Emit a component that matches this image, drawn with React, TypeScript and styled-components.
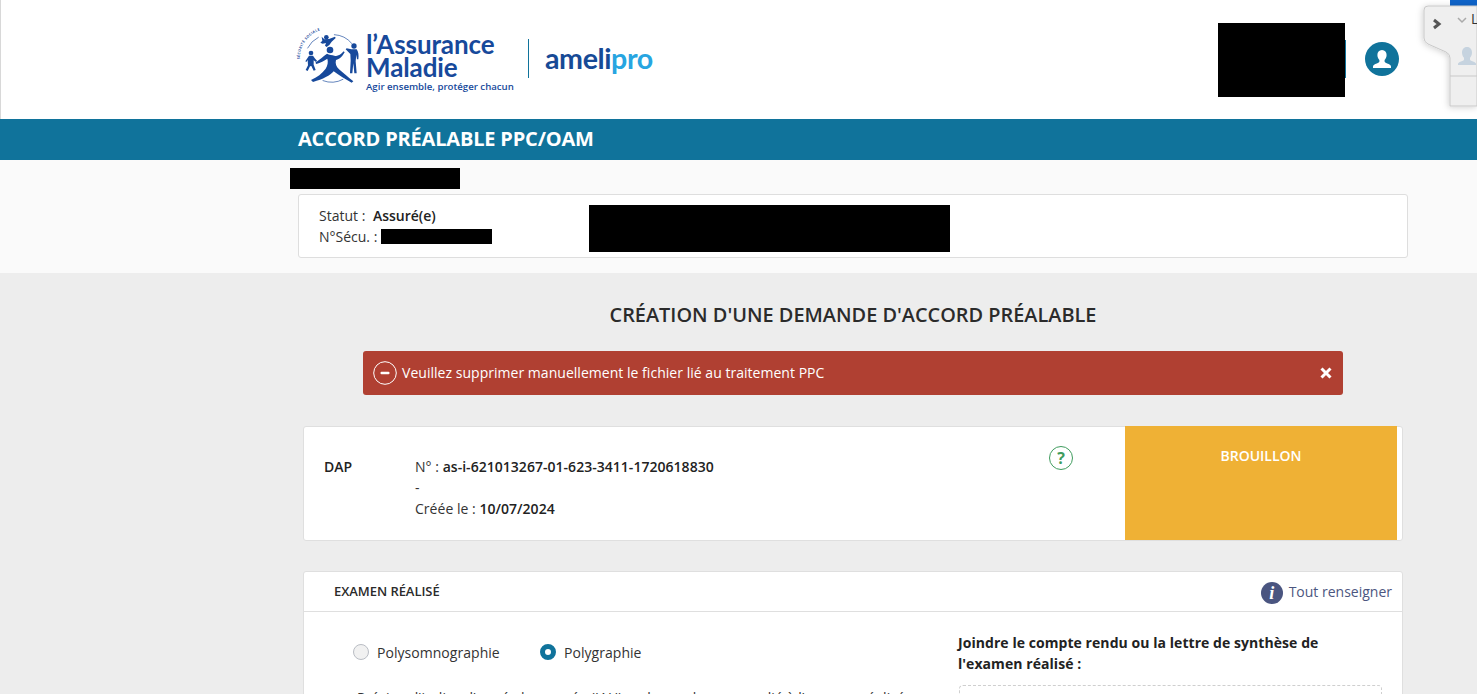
import React from "react";
import styled, { createGlobalStyle } from "styled-components";

const Global = createGlobalStyle`
  html, body { margin: 0; padding: 0; background: #ededed; }
  body { font-family: "Open Sans", "Liberation Sans", sans-serif; color: #2b2b2b; font-size: 14px; }
  #root { height: 694px; overflow: hidden; position: relative; }
  * { box-sizing: border-box; }
`;

const Redacted = styled.div<{ $w: number; $h: number }>`
  width: ${(p) => p.$w}px;
  height: ${(p) => p.$h}px;
  background: #000;
  flex: none;
`;

const Header = styled.header`
  height: 119px;
  background: #fff;
  border-left: 1px solid #d8d8d8;
  display: flex;
  align-items: flex-start;
  padding-left: 294px;
`;
const LogoMark = styled.svg`
  width: 66px;
  height: 70px;
  margin-top: 20px;
  flex: none;
`;
const BrandText = styled.div`
  margin: 33px 0 0 5px;
  width: 162px;
  flex: none;
  color: #17499b;
  font-family: Lato, "Open Sans", sans-serif;
`;
const BrandName = styled.div`
  font-size: 26px;
  line-height: 23px;
  font-weight: 700;
  letter-spacing: -0.1px;
`;
const BrandTag = styled.div`
  font-family: "Open Sans", sans-serif;
  font-size: 9.65px;
  line-height: 13px;
  font-weight: 600;
  margin-top: 1px;
  white-space: nowrap;
`;
const Divider = styled.div`
  width: 1px;
  height: 39px;
  background: #10739b;
  margin-top: 39px;
  flex: none;
`;
const Product = styled.div`
  margin: 39px 0 0 16px;
  font-family: Lato, "Open Sans", sans-serif;
  font-size: 28.6px;
  line-height: 38px;
  font-weight: 700;
  color: #174a96;
  letter-spacing: -0.4px;
  flex: none;
  width: 112px;
`;
const ProductAccent = styled.span`
  color: #27a5e1;
  font-weight: 700;
`;
const UserArea = styled.div`
  margin-left: auto;
  margin-right: 78px;
  margin-top: 23px;
  display: flex;
  align-items: flex-start;
`;
const UserRule = styled.div`
  width: 1px;
  height: 38px;
  margin-top: 17px;
  background: #10739b;
`;
const Avatar = styled.div`
  width: 34px;
  height: 34px;
  border-radius: 50%;
  background: #10739b;
  margin: 19px 0 0 19px;
  display: flex;
  align-items: center;
  justify-content: center;
`;

const Banner = styled.div`
  height: 41px;
  background: #10739b;
  color: #fff;
  font-size: 20px;
  line-height: 40px;
  font-weight: 700;
  padding-left: 298px;
  letter-spacing: -0.18px;
`;

const PatientZone = styled.section`
  background: #fafafa;
  padding: 8px 69px 15px 298px;
`;
const PatientName = styled(Redacted)`
  margin: 0 0 5px -8px;
`;
const PatientCard = styled.div`
  height: 64px;
  background: #fff;
  border: 1px solid #dedede;
  border-radius: 3px;
  display: flex;
  align-items: center;
  padding-left: 20px;
`;
const PatientInfo = styled.div`
  width: 270px;
  line-height: 21px;
  flex: none;
`;
const InfoLine = styled.div`
  display: flex;
  align-items: center;
  gap: 4px;
  height: 21px;
  font-size: 14px;
  color: #333;
`;
const PatientExtra = styled(Redacted)`
  margin-top: 4px;
`;
const Strong = styled.strong`
  font-weight: 600;
  color: #222;
`;

const Main = styled.main`
  padding: 0 74px 0 303px;
`;
const Title = styled.h1`
  margin: 0;
  padding-top: 28px;
  height: 78px;
  text-align: center;
  font-size: 19.9px;
  line-height: 28px;
  font-weight: 600;
  color: #2b2b2b;
`;
const Alert = styled.div`
  margin: 0 60px 31px;
  height: 44px;
  background: #b04032;
  border-radius: 3px;
  color: #fff;
  display: flex;
  align-items: center;
  padding: 0 11px 0 10px;
  gap: 5px;
  font-size: 14px;
`;
const AlertText = styled.span`
  flex: 1;
  position: relative;
  top: -1px;
  letter-spacing: 0.03px;
`;

const Card = styled.div`
  background: #fff;
  border: 1px solid #dfdfdf;
  border-radius: 3px;
`;
const DapCard = styled(Card)`
  height: 115px;
  display: flex;
  align-items: stretch;
  margin-bottom: 30px;
  padding-right: 5px;
`;
const DapLabel = styled.div`
  width: 111px;
  padding: 29px 0 0 20px;
  line-height: 21px;
  font-weight: 600;
  color: #222;
  flex: none;
`;
const DapInfo = styled.div`
  flex: 1;
  padding-top: 29px;
  line-height: 21px;
  color: #333;
  letter-spacing: 0.03px;
`;
const HelpCell = styled.div`
  width: 76px;
  padding-top: 19px;
  flex: none;
`;
const HelpRing = styled.div`
  width: 24px;
  height: 24px;
  border-radius: 50%;
  border: 1px solid #3f9c5e;
  color: #3f9c5e;
  font-weight: 700;
  font-size: 16px;
  line-height: 22px;
  text-align: center;
`;
const Status = styled.div`
  width: 272px;
  margin-top: -1px;
  background: #efb135;
  color: #fff;
  font-weight: 600;
  font-size: 14px;
  line-height: 20px;
  text-align: center;
  padding-top: 20px;
  flex: none;
`;

const SectionHead = styled.div`
  height: 40px;
  border-bottom: 1px solid #dfdfdf;
  display: flex;
  align-items: center;
  padding: 0 10px 0 30px;
`;
const SectionTitle = styled.h2`
  margin: 0;
  font-size: 13px;
  font-weight: 600;
  color: #2b2b2b;
  letter-spacing: -0.05px;
  flex: 1;
  position: relative;
  top: -1px;
`;
const FillLink = styled.a`
  display: flex;
  align-items: center;
  gap: 6px;
  color: #4c5680;
  font-size: 14px;
  line-height: 20px;
`;
const InfoBadge = styled.span`
  width: 22px;
  height: 22px;
  border-radius: 50%;
  background: #4a5580;
  color: #fff;
  font-family: "Liberation Serif", serif;
  font-style: italic;
  font-weight: 700;
  font-size: 18px;
  line-height: 22px;
  text-align: center;
  position: relative;
  top: 1px;
`;
const SectionBody = styled.div`
  display: grid;
  grid-template-columns: 654px 1fr;
  height: 200px;
`;
const LeftCol = styled.div`
  padding: 29px 0 0 49px;
`;
const RadioRow = styled.div`
  display: flex;
  align-items: center;
  height: 22px;
`;
const RadioItem = styled.label`
  display: flex;
  align-items: center;
  gap: 8px;
  width: 187px;
  font-size: 14px;
  color: #333;
  letter-spacing: 0.04px;
`;
const RadioDot = styled.span<{ $on?: boolean }>`
  width: 16px;
  height: 16px;
  border-radius: 50%;
  flex: none;
  background: ${(p) => (p.$on ? "#fff" : "#f1f1f1")};
  border: ${(p) => (p.$on ? "5px solid #10739b" : "1px solid #b9bdc4")};
`;
const Hint = styled.p`
  margin: 25px 0 0 4px;
  font-size: 14px;
  line-height: 20px;
  color: #333;
  white-space: nowrap;
  letter-spacing: 0.08px;
`;
const RightCol = styled.div`
  padding: 20px 20px 0 0;
`;
const JoinTitle = styled.div`
  font-weight: 700;
  font-size: 14px;
  line-height: 21px;
  color: #222;
  letter-spacing: 0.06px;
`;
const DropZone = styled.div`
  margin: 11px 0 0 1px;
  height: 90px;
  border: 1px dashed #cfcfcf;
  border-radius: 4px;
`;

const SideWidget = styled.svg`
  position: absolute;
  top: 0;
  right: 0;
  width: 67px;
  height: 115px;
`;
const WidgetLetter = styled.span`
  position: absolute;
  top: 10px;
  left: 1471px;
  font-size: 14px;
  line-height: 18px;
  color: #333;
`;

const Logo = () => (
  <LogoMark viewBox="0 0 198 210" aria-hidden="true">
    <defs>
      <path id="sealArc" d="M14 118 A90 90 0 0 1 104 26 A90 90 0 0 1 130 30" fill="none" />
    </defs>
    <text fontFamily="Open Sans, sans-serif" fontSize="10.500" fontWeight="700" fill="#17499b" letterSpacing="1.200">
      <textPath href="#sealArc">SÉCURITÉ SOCIALE</textPath>
    </text>
    <g fill="none" stroke="#17499b" strokeWidth="2" strokeLinecap="round">
      <path d="M70 52 A72 72 0 0 0 38 84" />
      <path d="M118 44 A72 72 0 0 1 170 70" />
      <path d="M84 182 A72 72 0 0 0 144 178" />
    </g>
    <g fill="#17499b">
      <circle cx="105" cy="90" r="10" />
      <path d="M96 101 C102 105 112 104 118 107 C126 110 136 106 146 94 L149 97 C140 113 130 119 123 120 C120 130 124 140 132 148 C144 158 160 172 175 184 L170 188 C152 178 132 166 116 154 C106 166 84 178 54 186 L48 180 C66 172 82 160 92 146 C98 136 100 126 97 116 C88 122 76 128 64 132 L61 128 C72 120 86 108 96 101 Z" />
      <circle cx="48" cy="99" r="7" />
      <path d="M42 107 L54 107 C58 113 62 118 66 122 L63 126 L56 121 L56 134 L62 150 L56 152 L49 138 L45 139 L38 153 L32 150 L39 136 L38 120 L34 126 L31 124 Z" />
      <circle cx="177" cy="78" r="8" />
      <path d="M169 88 L185 88 C190 95 192 106 190 118 L186 118 L184 104 L182 124 L185 160 L178 160 L175 130 L172 160 L165 160 L167 122 L166 102 L152 88 L155 85 Z" />
      <circle cx="94" cy="52" r="7" />
      <path d="M80 50 L88 58 L102 57 L120 50 L122 54 L110 65 L103 75 L95 81 L90 77 L93 69 L83 71 L76 68 L82 62 Z" />
    </g>
  </LogoMark>
);

const PersonGlyph = ({ size, color }: { size: number; color: string }) => (
  <svg width={size} height={size} viewBox="0 0 24 24" aria-hidden="true">
    <path
      fill={color}
      d="M12 3c-3 0-4.600 2.200-4.600 5 0 2 .8 3.800 2 5v1.600c0 .8-1 1.200-2.600 1.800C4.800 17.200 3 18 3 19.400V21h18v-1.600c0-1.400-1.800-2.200-3.800-3-1.600-.6-2.600-1-2.600-1.800V13c1.200-1.200 2-3 2-5 0-2.800-1.600-5-4.600-5z"
    />
  </svg>
);

export default function App() {
  return (
    <>
      <Global />
      <Header>
        <Logo />
        <BrandText>
          <BrandName>l’Assurance</BrandName>
          <BrandName>Maladie</BrandName>
          <BrandTag>Agir ensemble, protéger chacun</BrandTag>
        </BrandText>
        <Divider />
        <Product>
          ameli<ProductAccent>pro</ProductAccent>
        </Product>
        <UserArea>
          <Redacted $w={127} $h={74} />
          <UserRule />
          <Avatar>
            <PersonGlyph size={24} color="#fff" />
          </Avatar>
        </UserArea>
      </Header>
      <Banner>ACCORD PRÉALABLE PPC/OAM</Banner>
      <PatientZone>
        <PatientName $w={170} $h={21} />
        <PatientCard>
          <PatientInfo>
            <InfoLine>
              Statut :&nbsp; <Strong>Assuré(e)</Strong>
            </InfoLine>
            <InfoLine>
              N°Sécu. : <Redacted $w={111} $h={15} />
            </InfoLine>
          </PatientInfo>
          <PatientExtra $w={361} $h={47} />
        </PatientCard>
      </PatientZone>
      <Main>
        <Title>CRÉATION D'UNE DEMANDE D'ACCORD PRÉALABLE</Title>
        <Alert>
          <svg width="24" height="24" viewBox="0 0 24 24" aria-hidden="true">
            <circle cx="12" cy="12" r="11.300" fill="none" stroke="#fff" strokeWidth="1" />
            <rect x="7.500" y="10.800" width="9" height="2.400" rx="1" fill="#fff" />
          </svg>
          <AlertText>Veuillez supprimer manuellement le fichier lié au traitement PPC</AlertText>
          <svg width="12" height="12" viewBox="0 0 12 12" aria-hidden="true">
            <path d="M1.500 1.500 L10.500 10.500 M10.500 1.500 L1.500 10.500" stroke="#fff" strokeWidth="3" />
          </svg>
        </Alert>
        <DapCard>
          <DapLabel>DAP</DapLabel>
          <DapInfo>
            <div>
              N° : <Strong>as-i-621013267-01-623-3411-1720618830</Strong>
            </div>
            <div>-</div>
            <div>
              Créée le : <Strong>10/07/2024</Strong>
            </div>
          </DapInfo>
          <HelpCell>
            <HelpRing>?</HelpRing>
          </HelpCell>
          <Status>BROUILLON</Status>
        </DapCard>
        <Card>
          <SectionHead>
            <SectionTitle>EXAMEN RÉALISÉ</SectionTitle>
            <FillLink>
              <InfoBadge>i</InfoBadge>
              Tout renseigner
            </FillLink>
          </SectionHead>
          <SectionBody>
            <LeftCol>
              <RadioRow>
                <RadioItem>
                  <RadioDot />
                  Polysomnographie
                </RadioItem>
                <RadioItem>
                  <RadioDot $on />
                  Polygraphie
                </RadioItem>
              </RadioRow>
              <Hint>Précisez l'indice d'apnée hypopnée (IAH) ou le nombre moyen lié à l'examen réalisé</Hint>
            </LeftCol>
            <RightCol>
              <JoinTitle>
                Joindre le compte rendu ou la lettre de synthèse de
                <br />
                l'examen réalisé :
              </JoinTitle>
              <DropZone />
            </RightCol>
          </SectionBody>
        </Card>
      </Main>
      <SideWidget viewBox="0 0 67 115" aria-hidden="true">
        <defs>
          <filter id="widgetShadow" x="-30%" y="-20%" width="140%" height="140%">
            <feDropShadow dx="-1" dy="1" stdDeviation="3" floodColor="#000" floodOpacity="0.18" />
          </filter>
        </defs>
        <rect x="40" y="0" width="27" height="7" fill="#0e63c8" />
        <path
          d="M67 6 H18 Q14 6 14 10 V38 Q14 42 18 44 L36 52 Q40 54 40 58 V106 H67 Z"
          fill="#efefef"
          stroke="#c9c9c9"
          strokeWidth="1"
          filter="url(#widgetShadow)"
        />
        <line x1="40" y1="76" x2="67" y2="76" stroke="#c9c9c9" />
        <path d="M24 20 L29 24 L24 28" fill="none" stroke="#555" strokeWidth="3" />
        <path d="M48 18 L52 22 L56 18" fill="none" stroke="#aaa" strokeWidth="1.500" />
        <path
          fill="#c6d3df"
          d="M57 47c-3.400 0-5 2.500-5 5.500 0 2.200.8 4 2 5.200v1.800c0 1-1 1.300-3 2-2 .8-3 1.500-3 2.500v1h18v-1c0-1-1-1.700-3-2.500-2-.7-3-1-3-2v-1.800c1.200-1.200 2-3 2-5.200 0-3-1.600-5.500-5-5.500z"
        />
      </SideWidget>
      <WidgetLetter>L</WidgetLetter>
    </>
  );
}
